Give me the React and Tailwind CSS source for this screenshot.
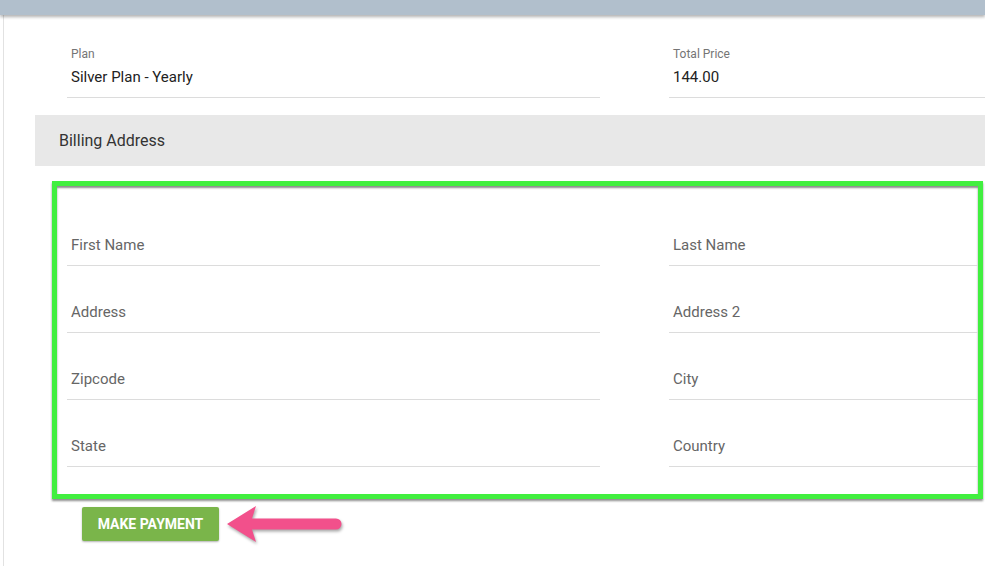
const Field = ({ label, value, small }) => (
  <div className="h-[67px] flex flex-col justify-end border-b border-[#dcdcdc]">
    {small ? (
      <div className="px-1 pb-[11px]">
        <p className="text-[12px] leading-[14px] text-[#757575]">{label}</p>
        <p className="text-[15px] leading-[18px] mt-[7px] text-[#222]">{value}</p>
      </div>
    ) : (
      <p className="px-1 pb-[10px] text-[15px] leading-[20px] text-[#666]">{label}</p>
    )}
  </div>
)

const Arrow = () => (
  <svg width="118" height="42" viewBox="0 0 118 42" className="drop-shadow-[1px_2px_1.5px_rgba(0,0,0,0.35)]">
    <path d="M2 20 L31 2 L27 14.5 L111 14.5 A5.5 5.5 0 0 1 111 25.5 L27 25.5 L31 38 Z" fill="#f2508b" strokeLinejoin="round" />
  </svg>
)

const App = () => {
  const billing = [
    ["First Name", "Last Name"],
    ["Address", "Address 2"],
    ["Zipcode", "City"],
    ["State", "Country"],
  ]

  return (
    <div className="w-[985px] h-[566px] overflow-hidden bg-white font-['Roboto',sans-serif]">
      <div className="h-[15px] bg-[#b1bfcc] shadow-[0_2px_3px_rgba(0,0,0,0.3)] relative z-10"></div>
      <div className="ml-[3px] border-l border-[#e2e2e2] h-[551px]">
        <div className="grid grid-cols-[533px_1fr] gap-x-[69px] pl-[63px] pt-[16px]">
          <Field small label="Plan" value="Silver Plan - Yearly" />
          <Field small label="Total Price" value="144.00" />
        </div>

        <div className="ml-[31px] mt-[17px] h-[51px] bg-[#e8e8e8] flex items-center pl-[24px]">
          <h2 className="text-[16px] text-[#333]">Billing Address</h2>
        </div>

        <div className="ml-[48px] mt-[15px] w-[931px] border-[5px] border-[#41ef3f] shadow-[0_2px_2px_rgba(0,0,0,0.45),inset_0_2px_2px_rgba(0,0,0,0.45)] pt-[13px] pb-[27px] overflow-hidden">
          <div className="grid grid-cols-[533px_1fr] gap-x-[69px] pl-[10px]">
            {billing.map(([a, b]) => [
              <Field key={a} label={a} />,
              <Field key={b} label={b} />,
            ])}
          </div>
        </div>

        <div className="flex items-start gap-[6px] ml-[78px] mt-[8px]">
          <button className="w-[137px] h-[34px] bg-[#7ab54a] rounded-[2px] text-white font-bold text-[14px] uppercase shadow-[0_1px_2px_rgba(0,0,0,0.3)]">
            Make Payment
          </button>
          <div className="-mt-[3px]">
            <Arrow />
          </div>
        </div>
      </div>
    </div>
  )
}

export default App
